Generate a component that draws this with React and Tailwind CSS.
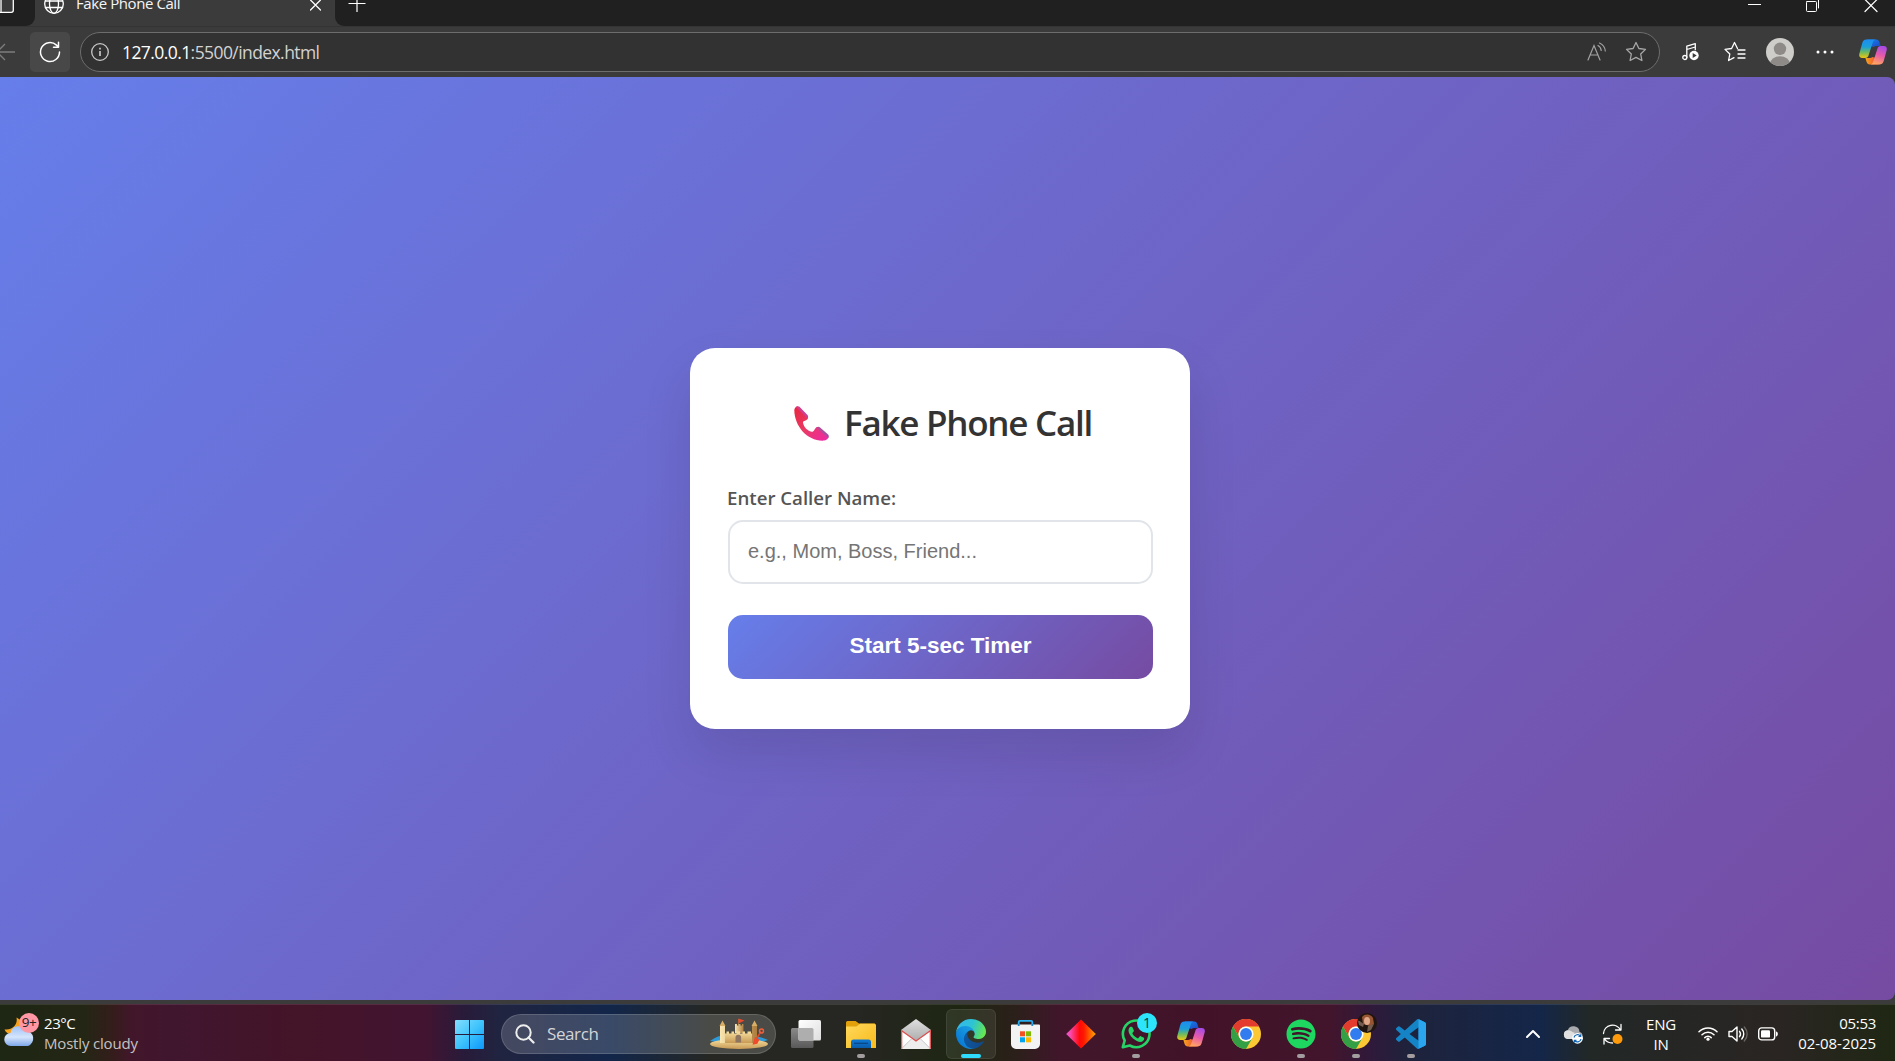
import React from "react";
import { FaSpotify } from "react-icons/fa";

const CopilotIcon = ({ id, className }) => (
  <svg viewBox="0 0 28 26" className={className}>
    <defs>
      <linearGradient id={id + "a"} x1="0" y1="0" x2="0" y2="1">
        <stop offset="0" stopColor="#1d8df2" />
        <stop offset=".4" stopColor="#1c9fd8" />
        <stop offset=".68" stopColor="#6dba62" />
        <stop offset="1" stopColor="#ecc80f" />
      </linearGradient>
      <linearGradient id={id + "b"} x1=".7" y1="0" x2=".4" y2="1">
        <stop offset="0" stopColor="#a64be8" />
        <stop offset=".5" stopColor="#e85ba8" />
        <stop offset="1" stopColor="#ffa463" />
      </linearGradient>
      <linearGradient id={id + "c"} x1="0" y1="0" x2="1" y2="1">
        <stop offset="0" stopColor="#1686ee" />
        <stop offset="1" stopColor="#1c45c4" />
      </linearGradient>
      <linearGradient id={id + "d"} x1="0" y1="0" x2="1" y2="0">
        <stop offset="0" stopColor="#f5a51c" />
        <stop offset="1" stopColor="#ee3d3c" />
      </linearGradient>
    </defs>
    <path d="M8 .6h9.200c1.700 0 2.700.9 3.200 2.500l1.200 4h-4.600c-1 0-1.700.3-2.300 1L11 7z" fill={`url(#${id}c)`} />
    <path d="M20 25.400h-9.200c-1.700 0-2.700-.9-3.200-2.500l-1.200-4H11c1 0 1.700-.3 2.300-1l3.700 1z" fill={`url(#${id}d)`} />
    <path d="M7.200.6h9.300c-1.800.3-2.300 1.600-2.900 3.400L9.600 16.300c-.6 1.800-1.500 2.700-3.300 2.700H3.200C.6 19-.3 17.100.4 14.500L3.200 4.200C3.900 1.900 5 .6 7.200.6z" fill={`url(#${id}a)`} />
    <path d="M20.800 25.400h-9.300c1.800-.3 2.300-1.600 2.900-3.400L18.400 9.700c.6-1.800 1.500-2.700 3.300-2.700h3.100c2.600 0 3.500 1.900 2.800 4.500l-2.800 10.300c-.7 2.300-1.800 3.600-4 3.600z" fill={`url(#${id}b)`} />
  </svg>
);

const ChromeIcon = () => (
  <svg viewBox="0 0 48 48" className="size-[30px]">
    <circle cx="24" cy="24" r="24" fill="#fcc934" />
    <path d="M3.200 12A24 24 0 0 1 44.800 12H24a12 12 0 0 0-10.400 18z" fill="#e33b2e" />
    <path d="M3.200 12 13.600 30A12 12 0 0 0 34.400 30L24 48A24 24 0 0 1 3.200 12z" fill="#34a046" />
    <circle cx="24" cy="24" r="12" fill="#fff" />
    <circle cx="24" cy="24" r="9.500" fill="#317df0" />
  </svg>
);

const EdgeIcon = () => (
  <svg viewBox="0 0 256 256" className="size-[30px]">
    <defs>
      <linearGradient id="e1" x1=".2" y1="0" x2="1" y2=".3">
        <stop offset="0" stopColor="#0c59a4" />
        <stop offset="1" stopColor="#114a8b" />
      </linearGradient>
      <linearGradient id="e2" x1=".9" y1=".2" x2=".2" y2=".9">
        <stop offset="0" stopColor="#1b9de2" />
        <stop offset=".3" stopColor="#1595df" />
        <stop offset="1" stopColor="#0878d4" />
      </linearGradient>
      <linearGradient id="e3" x1="0" y1=".3" x2="1" y2=".55">
        <stop offset="0" stopColor="#35b8ee" />
        <stop offset=".5" stopColor="#2dc3d4" />
        <stop offset=".8" stopColor="#4fd784" />
        <stop offset="1" stopColor="#69e84e" />
      </linearGradient>
    </defs>
    <g transform="translate(-4.630 -4.920)">
      <path fill="url(#e1)" d="M235.680 195.460a93.730 93.730 0 0 1-10.540 4.710 101.870 101.870 0 0 1-35.900 6.460c-47.320 0-88.540-32.550-88.540-74.320A31.480 31.480 0 0 1 117.130 105c-42.800 1.800-53.800 46.400-53.800 72.530 0 73.880 68.090 81.370 82.760 81.370 7.910 0 19.840-2.300 27-4.560l1.310-.44a128.340 128.340 0 0 0 66.600-52.800 4 4 0 0 0-5.320-5.640Z" />
      <path fill="url(#e2)" d="M110.340 246.340A79.200 79.200 0 0 1 87.600 225a80.720 80.720 0 0 1 29.530-120c3.120-1.470 8.450-4.130 15.540-4a32.350 32.350 0 0 1 25.690 13 31.880 31.880 0 0 1 6.360 18.660c0-.21 24.460-79.600-80-79.600-43.900 0-80 41.660-80 78.210a130.150 130.150 0 0 0 12.110 56 128 128 0 0 0 156.380 67.110 75.550 75.550 0 0 1-62.780-8Z" />
      <path fill="url(#e3)" d="M156.940 153.780c-.81 1.050-3.300 2.500-3.300 5.660 0 2.610 1.700 5.120 4.720 7.230 14.380 10 41.490 8.680 41.560 8.680a59.560 59.560 0 0 0 30.270-8.350 61.380 61.380 0 0 0 30.430-52.880c.26-22.410-8-37.310-11.340-43.910C228.090 28.760 182.350 4.920 132.610 4.920a128 128 0 0 0-128 126.200c.48-36.540 36.800-66.050 80-66.050 3.500 0 23.460.34 42 10.070 16.340 8.580 24.900 18.940 30.850 29.210 6.180 10.670 7.280 24.150 7.280 29.520s-2.740 13.330-7.800 19.910Z" />
    </g>
  </svg>
);

const WindowsIcon = () => (
  <svg viewBox="0 0 29 29" className="size-[29px]">
    <defs>
      <linearGradient id="win" gradientUnits="userSpaceOnUse" x1="0" y1="0" x2="29" y2="29">
        <stop offset="0" stopColor="#83deff" />
        <stop offset=".5" stopColor="#3fc4fb" />
        <stop offset="1" stopColor="#0d97fb" />
      </linearGradient>
    </defs>
    <path fill="url(#win)" d="M1 0h13v14H0V1a1 1 0 0 1 1-1zM15 0h13a1 1 0 0 1 1 1v13H15zM0 15h14v14H1a1 1 0 0 1-1-1zM15 15h14v13a1 1 0 0 1-1 1H15z" />
  </svg>
);

const CastleIcon = () => (
  <svg viewBox="0 0 60 32" className="h-8 w-[60px]">
    <defs>
      <linearGradient id="sand" x1="0" y1="0" x2="0" y2="1">
        <stop offset="0" stopColor="#f7dfa0" />
        <stop offset="1" stopColor="#c79a55" />
      </linearGradient>
      <linearGradient id="tower" x1="0" y1="0" x2="1" y2="0">
        <stop offset="0" stopColor="#fae6b0" />
        <stop offset="1" stopColor="#ad7d3d" />
      </linearGradient>
    </defs>
    <path d="M1 23c5-4 11-6 16-6l5 9zM42 18c8 0 12 2 17 4l-14 4z" fill="#2e9bd8" />
    <ellipse cx="30" cy="26" rx="29" ry="5" fill="url(#sand)" />
    <path d="M29.500 1v6" stroke="#a1783d" strokeWidth=".8" />
    <path d="M29.500.5l6 2-6 3z" fill="#f0482b" />
    <path d="M26 6h2v1.500h1.500V6h2v1.500H33V6h1.500v9H26z" fill="url(#tower)" />
    <path d="M12 13.500h3v2h2.500v-2H20v2h2.500v-2H25v2h2.500v-2H31v2h2.500v-2H36v2h2.500v-2H42v2h3V25H12z" fill="url(#sand)" />
    <path d="M11 8h5v17h-5zM43 8h5v17h-5z" fill="url(#tower)" />
    <path d="M10.500 8l3-5.500 3 5.500zM42.500 8l3-5.500 3 5.500z" fill="#d8ae66" />
    <path d="M26.500 24.500v-5a2.800 2.800 0 0 1 5.600 0v5z" fill="#8d7560" />
    <path d="M52 13.500l-5 8" stroke="#e8472b" strokeWidth="1.500" />
    <circle cx="52.500" cy="13" r="2" fill="none" stroke="#f0603a" strokeWidth="1.500" />
    <path d="M46 19l4.500 2.600-2.200 4.200-4.800.9z" fill="#ee4a2c" />
  </svg>
);

const TaskViewIcon = () => (
  <svg viewBox="0 0 30 28" className="h-7 w-[30px]">
    <defs>
      <linearGradient id="tv" x1="0" y1="0" x2="1" y2="1">
        <stop offset="0" stopColor="#fff" />
        <stop offset="1" stopColor="#dedede" />
      </linearGradient>
      <linearGradient id="tv2" x1="0" y1="0" x2="0" y2="1">
        <stop offset="0" stopColor="#8a8a8a" />
        <stop offset="1" stopColor="#595959" />
      </linearGradient>
    </defs>
    <rect x="0" y="8" width="22.500" height="20" rx="1.500" fill="url(#tv2)" />
    <rect x="7.500" y="0" width="22.500" height="20.500" rx="1.500" fill="url(#tv)" />
    <path d="M7.500 8h13.500a1.500 1.500 0 0 1 1.500 1.500v11H9a1.500 1.500 0 0 1-1.500-1.500z" fill="#aeaeae" />
  </svg>
);

const ExplorerIcon = () => (
  <svg viewBox="0 0 30 27" className="h-[27px] w-[30px]">
    <defs>
      <linearGradient id="fold" x1="0" y1="0" x2="1" y2="1">
        <stop offset="0" stopColor="#ffd95c" />
        <stop offset="1" stopColor="#f8b91b" />
      </linearGradient>
      <linearGradient id="fold2" x1="0" y1="0" x2="0" y2="1">
        <stop offset="0" stopColor="#0f7ad4" />
        <stop offset="1" stopColor="#0b5cab" />
      </linearGradient>
    </defs>
    <path d="M1.500 0h8l3.500 2.500h16L27 8H0V1.500A1.500 1.500 0 0 1 1.500 0z" fill="#e2a10a" />
    <path d="M0 5.500h10.500L14 2.800h14.500A1.500 1.500 0 0 1 30 4.300V27H0z" fill="url(#fold)" />
    <path d="M5 27v-6a2.500 2.500 0 0 1 2.500-2.500h15A2.500 2.500 0 0 1 25 21v6z" fill="url(#fold2)" />
    <path d="M8 22.300h14" stroke="#0a4483" strokeWidth="1.200" />
  </svg>
);

const MailIcon = () => (
  <svg viewBox="0 0 30 30" className="size-[30px]">
    <defs>
      <linearGradient id="mailg" x1="0" y1="0" x2="0" y2="1">
        <stop offset="0" stopColor="#e0e0e0" />
        <stop offset="1" stopColor="#999" />
      </linearGradient>
    </defs>
    <path d="M0 11 15 0l15 11v19H0z" fill="url(#mailg)" />
    <path d="M0 11l11 8L0 30zM30 11l-11 8 11 11z" fill="#fff" />
    <path d="M0 30l11-11 4 3 4-3 11 11z" fill="#eee" />
    <path d="M.7 30V11.700L15 22l14.300-10.300V30" fill="none" stroke="#dc4d4d" strokeWidth="1.200" />
    <path d="M.5 29.800 11 19.500M29.500 29.800 19 19.500" stroke="#ccc" strokeWidth=".8" />
  </svg>
);

const StoreIcon = () => (
  <svg viewBox="0 0 29 29" className="mr-px size-[29px]">
    <path d="M7.700 6V2.200c0-.8.500-1.300 1.300-1.300h11c.8 0 1.300.5 1.300 1.300V6" fill="none" stroke="#29aef0" strokeWidth="1.800" />
    <path d="M1 4.500h27a1 1 0 0 1 1 1V24a5 5 0 0 1-5 5H5a5 5 0 0 1-5-5V5.500a1 1 0 0 1 1-1z" fill="#f3f3f3" />
    <path d="M7.700 6V4M21.300 6V4" stroke="#1888c8" strokeWidth="1.800" />
    <path d="M9 11.300h5v5H9z" fill="#f25022" />
    <path d="M15 11.300h5v5h-5z" fill="#7fba00" />
    <path d="M9 17.300h5v5H9z" fill="#00a4ef" />
    <path d="M15 17.300h5v5h-5z" fill="#ffb900" />
  </svg>
);

const DiamondIcon = () => (
  <svg viewBox="0 0 30 30" className="size-[30px]">
    <defs>
      <linearGradient id="dia">
        <stop offset="0" stopColor="#ee58d8" />
        <stop offset=".15" stopColor="#fa48a8" />
        <stop offset=".45" stopColor="#ff0808" />
        <stop offset=".6" stopColor="#ff1a00" />
        <stop offset="1" stopColor="#ffa800" />
      </linearGradient>
    </defs>
    <path d="M15 .4 29.800 15 15 29.600.2 15z" fill="url(#dia)" />
  </svg>
);

const WhatsAppIcon = () => (
  <svg viewBox="0 0 30 30" className="size-[30px]">
    <path d="M1.800 28.200 3.700 21.500A13.300 13.300 0 1 1 8.800 26.500z" fill="none" stroke="#25d366" strokeWidth="2.600" strokeLinejoin="round" />
    <path d="M10.200 7.700c.7 0 1.100.1 1.500 1l1.100 2.600c.2.600 0 1-.3 1.400l-.9 1.100c-.3.300-.3.600-.1 1 1.200 2 2.700 3.400 4.900 4.400.4.200.8.200 1-.1l1.300-1.600c.3-.4.700-.5 1.100-.3l2.700 1.300c.4.200.7.400.7.700.1 2-1.600 3.700-3.800 3.700-2 0-5-1.200-7.600-3.600-2.800-2.600-4.300-5.300-4.300-7.700 0-1.700.9-3.200 1.900-3.800.2-.1.500-.1.800-.1z" fill="#25d366" />
  </svg>
);

const VSCodeIcon = () => (
  <svg viewBox="0 0 24 24" className="size-[30px]">
    <path fill="#1584c7" d="M23.150 2.587L18.210.21a1.494 1.494 0 0 0-1.705.29l-9.460 8.630-4.120-3.128a.999.999 0 0 0-1.276.057L.327 7.261A1 1 0 0 0 .326 8.740L3.899 12 .326 15.260a1 1 0 0 0 .001 1.479L1.650 17.940a.999.999 0 0 0 1.276.057l4.120-3.128 9.460 8.630a1.492 1.492 0 0 0 1.704.29l4.942-2.377A1.500 1.500 0 0 0 24 20.060V3.939a1.500 1.500 0 0 0-.85-1.352zm-5.146 14.861L10.826 12l7.178-5.448v10.896z" />
    <path fill="#2ba6ee" d="M18 .15v23.700l5.150-2.440A1.500 1.500 0 0 0 24 20.060V3.940a1.500 1.500 0 0 0-.85-1.350L18.210.21z" />
  </svg>
);

const WeatherIcon = () => (
  <svg viewBox="0 0 32 32" className="size-8">
    <defs>
      <linearGradient id="cld" x1="0" y1="0" x2="0" y2="1">
        <stop offset="0" stopColor="#9fc2f5" />
        <stop offset=".55" stopColor="#d5e5fc" />
        <stop offset="1" stopColor="#7da7ea" />
      </linearGradient>
    </defs>
    <path d="M12.500 2.500C14 9 9 15.500.5 14.500 2 19 8 21 13 18s7-9 5-12z" fill="#f7a21c" />
    <path d="M7 31a6.500 6.500 0 0 1-.5-13 8 8 0 0 1 15-2.500A8 8 0 0 1 24 31z" fill="url(#cld)" />
  </svg>
);

const stroke = { fill: "none", stroke: "#fff", strokeLinecap: "round", strokeLinejoin: "round" };
const starPath = "M11 1.500l2.900 6 6.600.9-4.800 4.600 1.200 6.500-5.900-3.100-5.900 3.100 1.200-6.500L1.500 8.400l6.600-.9z";

function TabStrip() {
  return (
    <header className="flex h-[26px] shrink-0 overflow-hidden bg-[#3b3b3b]">
      <div className="flex w-[35px] shrink-0 items-start rounded-br-[9px] bg-[#202020]">
        <svg viewBox="0 0 35 26" className="h-[26px] w-[35px]">
          <path d="M1 0h12v12H1z" fill="#3a3a3a" />
          <path d="M-2 12.300h13.300a2 2 0 0 0 2-2V-2M1 0v12" {...stroke} strokeWidth="1.300" />
        </svg>
      </div>
      <div className="flex w-[300px] shrink-0 items-start">
        <svg viewBox="0 0 20 14" className="ml-[9px] h-[14px] w-5">
          <g {...stroke} strokeWidth="1.300">
            <circle cx="10" cy="4" r="9.300" />
            <ellipse cx="10" cy="4" rx="4.500" ry="9.300" />
            <path d="M1.500 1h17M1.500 7.500h17" />
          </g>
        </svg>
        <span className="-mt-2 ml-[12px] h-[22px] flex-1 whitespace-nowrap font-['Open_Sans','Noto_Sans',sans-serif] text-[15px] leading-[22px] tracking-[-0.42px] text-[#f5f5f5]">
          Fake Phone Call
        </span>
        <svg viewBox="0 0 11 11" className="mr-[14px] h-[11px] w-[11px]">
          <path d="M.5 0l10 10M10.500 0l-10 10" {...stroke} strokeWidth="1.300" />
        </svg>
      </div>
      <div className="flex flex-1 items-start justify-between rounded-bl-[9px] bg-[#202020] pl-[13px] pr-[17px]">
        <svg viewBox="0 0 18 12" className="h-3 w-[18px]">
          <path d="M.5 3.500h17M9 0v12" stroke="#fff" strokeWidth="1.200" />
        </svg>
        <div className="flex items-start gap-[45px]">
          <svg viewBox="0 0 13 13" className="size-[13px]">
            <path d="M0 4.500h13" stroke="#fff" />
          </svg>
          <svg viewBox="0 0 13 13" className="size-[13px]">
            <path d="M1 1.500h8.500a1 1 0 0 1 1 1V10.500a1 1 0 0 1-1 1H1.500a1 1 0 0 1-1-1V2.500a1 1 0 0 1 1-1zM12.500 0v8" {...stroke} />
          </svg>
          <svg viewBox="0 0 14 13" className="h-[13px] w-[14px]">
            <path d="M1 -.5l12 12M13 -.5L1 11.500" {...stroke} strokeWidth="1.200" />
          </svg>
        </div>
      </div>
    </header>
  );
}

function Toolbar() {
  return (
    <nav className="flex h-[51px] shrink-0 items-center border-t border-[#343434] bg-[#3b3b3b]">
      <svg viewBox="0 0 15 18" className="mb-px h-[18px] w-[15px]">
        <path d="M-2 9h17M5 1l-8 8 8 8" fill="none" stroke="#7d7d7d" strokeWidth="1.300" />
      </svg>
      <button className="ml-[15px] flex size-10 items-center justify-center rounded-[5px] bg-[#484848]">
        <svg viewBox="0 0 22 22" className="size-[22px]">
          <path d="M20.500 11a9.500 9.500 0 1 1-3-6.900l1.700 1.700M19.500 1.200v5h-5" {...stroke} strokeWidth="1.500" />
        </svg>
      </button>
      <div className="ml-[10px] flex h-10 w-[1580px] items-center rounded-full border border-[#6d6d6d] bg-[#323232] pl-[10px] pr-[11px]">
        <svg viewBox="0 0 18 18" className="size-[18px]">
          <circle cx="9" cy="9" r="8.300" fill="none" stroke="#c8c8c8" strokeWidth="1.300" />
          <path d="M9 8v5M9 4.800v1.600" stroke="#d0d0d0" strokeWidth="1.600" />
        </svg>
        <span className="mb-px ml-[13px] flex-1 whitespace-nowrap font-['Open_Sans','Noto_Sans',sans-serif] text-[17.500px] leading-6 tracking-[-0.58px] text-[#d3d3d3]">
          <span className="text-white">127.0.0.1</span>:5500/index.html
        </span>
        <svg viewBox="0 0 20 20" className="mr-[18px] mb-px size-5">
          <g fill="none" stroke="#a3a3a3" strokeWidth="1.200" strokeLinecap="round">
            <path d="M1 18 7 3.500 13 18M3 13h8M11 3.500c2 1 3 2.800 3.200 5M12.500 1c3.300 1.500 5.500 4.500 5.800 8" />
          </g>
        </svg>
        <svg viewBox="0 0 22 22" className="mr-[1px] size-[22px]">
          <path d={starPath} fill="none" stroke="#a8a8a8" strokeWidth="1.300" strokeLinejoin="round" />
        </svg>
      </div>
      <div className="flex flex-1 items-center">
        <svg viewBox="0 0 17 18" className="ml-[22px] h-[18px] w-[17px]">
          <circle cx="2.800" cy="14.500" r="2" {...stroke} strokeWidth="1.300" />
          <path d="M4.800 14.500V3.200l8.500-2.500v6M4.800 6.500l8.500-2.500" {...stroke} strokeWidth="1.300" />
          <circle cx="12" cy="12.500" r="4.700" fill="#fff" />
          <path d="M10.700 10v5l4-2.500z" fill="#3b3b3b" />
        </svg>
        <svg viewBox="0 0 22 22" className="ml-[25px] size-[22px]">
          <path d="M13.500 7.500 10.500 1.500l-2.900 6-6.600.9 4.800 4.600-1.200 6.500 5.400-2.800M14 9h7M14 13h7M14 17h7" {...stroke} strokeWidth="1.300" />
        </svg>
        <svg viewBox="0 0 28 28" className="ml-[20px] size-7">
          <defs>
            <clipPath id="av"><circle cx="14" cy="14" r="14" /></clipPath>
          </defs>
          <circle cx="14" cy="14" r="14" fill="#cfcdca" />
          <g clipPath="url(#av)" fill="#8d8a87">
            <circle cx="14" cy="10.800" r="6.200" />
            <ellipse cx="14" cy="26" rx="10" ry="7.700" />
          </g>
        </svg>
        <svg viewBox="0 0 18 4" className="ml-[22px] h-1 w-[18px]">
          <g fill="#fff"><circle cx="2" cy="2" r="1.500" /><circle cx="9" cy="2" r="1.500" /><circle cx="16" cy="2" r="1.500" /></g>
        </svg>
        <CopilotIcon id="top" className="ml-[25px] h-[26px] w-7" />
      </div>
    </nav>
  );
}

function CallCard() {
  return (
    <section className="relative top-[-0.5px] left-[-7.5px] flex h-[381px] w-[500px] flex-col rounded-[25px] bg-white pr-[37px] pl-[38px] shadow-[0_25px_50px_rgba(0,0,0,0.1)]">
      <h1 className="mt-[49px] flex h-[52px] items-center pl-[66px] font-['Open_Sans','Noto_Sans',sans-serif] text-[35px] leading-[52px] font-semibold tracking-[-1.25px] text-[#333]">
        <svg viewBox="0 0 35 35" className="mt-px mr-[15px] size-[35px] shrink-0">
          <defs>
            <linearGradient id="ph" x1="0" y1="0" x2="1" y2="1">
              <stop offset="0" stopColor="#e8253f" />
              <stop offset=".5" stopColor="#ea3a66" />
              <stop offset="1" stopColor="#ee28a8" />
            </linearGradient>
            <linearGradient id="ph2" x1="0" y1="0" x2="1" y2="1">
              <stop offset="0" stopColor="#d83a8c" />
              <stop offset="1" stopColor="#a1509f" />
            </linearGradient>
          </defs>
          <path d="M.3 4.500C.2 2.500 1.500.8 3.500.3L14 11c.4 1.500-.8 2.900-2.500 3.600-1.600.6-2.700 1-2.500 2.200.8 4.200 4.200 8 8.600 9 2.600.3 3-3.800 5.300-4.900L34.500 31c-.5 2.300-2.500 3.500-4.500 3.600C13.500 35.500.7 20.500.3 4.500z" fill="url(#ph)" />
          <path d="M2 1C2.700.2 4.500-.3 5.500.8l7.700 7.900c1.300 1.400 1.200 2.800.4 3.800zM22.500 21.500c.7-1 2.400-1.200 3.600-.1l8 7c1 1 .9 2.600.1 3.600z" fill="url(#ph2)" />
        </svg>
        <span className="whitespace-nowrap">Fake Phone Call</span>
      </h1>
      <label className="-ml-px mt-[36px] h-[26px] whitespace-nowrap font-['Open_Sans','Noto_Sans',sans-serif] text-[18.700px] leading-[26px] font-semibold tracking-[-0.02px] text-[#555]">
        Enter Caller Name:
      </label>
      <input
        placeholder="e.g., Mom, Boss, Friend..."
        className="mt-[9px] h-16 w-full rounded-[15px] border-2 border-[#e1e5e9] bg-white px-[18px] font-['Liberation_Sans',Arial,sans-serif] text-[20px] text-[#333] outline-none placeholder:text-[#757575]"
      />
      <button className="mt-[31px] h-16 w-full rounded-[15px] bg-[linear-gradient(135deg,#667eea_0%,#764ba2_100%)] pb-px font-['Liberation_Sans',Arial,sans-serif] text-[22.500px] font-bold text-white">
        Start 5-sec Timer
      </button>
    </section>
  );
}

function TaskItem({ children, dot, active }) {
  return (
    <div className={active ? "relative flex size-[50px] shrink-0 items-center justify-center rounded-[6px] border border-white/8 bg-white/8" : "relative flex size-[50px] shrink-0 items-center justify-center"}>
      {children}
      {dot && <i className="absolute bottom-[1px] left-[21px] h-1 w-2 rounded-full bg-[#a39da0]" />}
      {active && <i className="absolute bottom-0 left-[14px] h-1 w-5 rounded-full bg-[#2fdcfb]" />}
    </div>
  );
}

function Taskbar() {
  return (
    <footer className="flex h-[57px] shrink-0 items-center overflow-hidden border-t border-white/10 bg-[linear-gradient(90deg,#1e2614_0px,#242615_85px,#341d1b_112px,#42162a_132px,#40162f_170px,#441428_300px,#421431_425px,#281b3a_465px,#202440_500px,#12264a_610px,#1f2730_680px,#262722_710px,#262622_860px,#1e2612_960px,#2b201a_1015px,#41162b_1060px,#421328_1200px,#42152c_1330px,#30193a_1370px,#1e233c_1410px,#142649_1540px,#222826_1590px,#2a2523_1780px,#1f2713_1895px)] font-['Open_Sans','Noto_Sans',sans-serif] text-white">
      <div className="flex w-[444px] shrink-0 items-center">
        <div className="relative ml-[4px] mr-[8px] mt-[-5px] size-8">
          <WeatherIcon />
          <span className="absolute left-[15px] top-[-2px] flex size-5 items-center justify-center rounded-full bg-[#ff98a4] text-[13.500px] leading-none tracking-[-0.5px] text-[#222]">9+</span>
        </div>
        <div className="text-[15px] leading-5 tracking-[-0.45px] whitespace-nowrap">
          <div>23°C</div>
          <div className="tracking-[-0.18px] text-[#c6c2c2]">Mostly cloudy</div>
        </div>
      </div>
      <div className="flex w-[1000px] shrink-0 items-center gap-[5px] pt-[2px]">
        <TaskItem><WindowsIcon /></TaskItem>
        <div className="ml-[2px] flex h-10 w-[275px] shrink-0 items-center rounded-full border border-white/15 bg-white/17 pl-[13px] pr-[6px]">
          <svg viewBox="0 0 20 20" className="size-5">
            <circle cx="8.500" cy="8.500" r="7.200" fill="none" stroke="#eee" strokeWidth="2" />
            <path d="M13.500 13.500l5 5" stroke="#eee" strokeWidth="2.300" strokeLinecap="round" />
          </svg>
          <span className="ml-[12px] flex-1 text-[17px] leading-6 tracking-[-0.4px] text-[#d4d5d8]">Search</span>
          <CastleIcon />
        </div>
        <TaskItem><TaskViewIcon /></TaskItem>
        <TaskItem dot><ExplorerIcon /></TaskItem>
        <TaskItem><MailIcon /></TaskItem>
        <TaskItem active><EdgeIcon /></TaskItem>
        <TaskItem><StoreIcon /></TaskItem>
        <TaskItem><DiamondIcon /></TaskItem>
        <TaskItem dot>
          <WhatsAppIcon />
          <span className="absolute left-[26px] top-[4px] flex size-5 items-center justify-center rounded-full bg-[#2ce5fb] text-[14px] leading-none text-[#16343a]">1</span>
        </TaskItem>
        <TaskItem><CopilotIcon id="tb" className="h-[26px] w-7" /></TaskItem>
        <TaskItem><ChromeIcon /></TaskItem>
        <TaskItem dot><FaSpotify className="size-[30px] text-[#1ed760]" /></TaskItem>
        <TaskItem dot>
          <ChromeIcon />
          <svg viewBox="0 0 20 20" className="absolute left-[26px] top-[4px] size-5">
            <circle cx="10" cy="10" r="10" fill="#21150f" />
            <path d="M5 4c3-4 9-3 11 1l1 6-4 2-7-2z" fill="#985533" />
            <ellipse cx="10" cy="8" rx="3" ry="4" fill="#e0a98a" />
            <path d="M1 8c2-1 3 2 6 3l-1 3-4-2zM11 13l6-2-3 6-4 2z" fill="#725c50" />
          </svg>
        </TaskItem>
        <TaskItem dot><VSCodeIcon /></TaskItem>
      </div>
      <div className="flex flex-1 items-center pl-[82px] pr-[19px]">
        <svg viewBox="0 0 14 9" className="h-[9px] w-[14px] shrink-0">
          <path d="M1 8l6-6 6 6" {...stroke} strokeWidth="2" />
        </svg>
        <svg viewBox="0 0 20 18" className="ml-[23px] mt-[3px] h-[18px] w-5 shrink-0">
          <path d="M4.500 13a4.400 4.400 0 0 1 .3-8.700A6 6 0 0 1 16.500 6c2 .3 3 2 3 4v3z" fill="#a8aaad" />
          <path d="M4.500 13a4.400 4.400 0 0 1 .3-8.700c3 0 4.200 2 7 2.500L9 13z" fill="#e0e0e0" />
          <circle cx="14.500" cy="12.300" r="5.400" fill="#fff" />
          <path d="M11 11.500a3.600 3.600 0 0 1 6.500-1.200M18 13a3.600 3.600 0 0 1-6.500 1.400M17.700 8.300v2.200h-2.200M11.300 16.500v-2.200h2.200" fill="none" stroke="#1267b8" strokeWidth="1.200" />
        </svg>
        <svg viewBox="0 0 22 22" className="ml-[19px] mt-[2px] size-[22px] shrink-0">
          <path d="M1.500 10.500a9 9 0 0 1 17-3.500M19 1.500V7h-5.500M2 21v-5.500h5.500M2.500 16c2 3 5 4 8 4" {...stroke} strokeWidth="1.300" />
          <circle cx="15.500" cy="16" r="5" fill="#ff9a0b" />
        </svg>
        <div className="ml-[21px] mt-px w-8 shrink-0 text-center text-[15px] leading-5 tracking-[-0.2px]">
          <div>ENG</div>
          <div>IN</div>
        </div>
        <svg viewBox="0 0 20 15" className="ml-[21px] h-[15px] w-5 shrink-0">
          <path d="M1 5.700a12.700 12.700 0 0 1 18 0M4 8.800a8.500 8.500 0 0 1 12 0M6.800 11.600a4.500 4.500 0 0 1 6.400 0" {...stroke} strokeWidth="1.500" />
          <circle cx="10" cy="13.200" r="1.600" fill="#fff" />
        </svg>
        <svg viewBox="0 0 20 18" className="ml-[10px] mt-px h-[18px] w-5 shrink-0">
          <path d="M1 6.500h3L9 2v14l-5-4.500H1zM11.500 6.300c1.200 1.600 1.200 3.800 0 5.400M13.800 4c2.600 2.800 2.600 7.200 0 10" {...stroke} strokeWidth="1.400" />
          <path d="M16.300 2c3.800 4 3.800 10 0 14" fill="none" stroke="#68645f" strokeWidth="1.400" strokeLinecap="round" />
        </svg>
        <svg viewBox="0 0 20 14" className="ml-[10px] mt-px h-[14px] w-5 shrink-0">
          <rect x=".7" y=".9" width="16" height="12" rx="3" {...stroke} strokeWidth="1.400" />
          <rect x="3" y="3.200" width="9" height="7.400" rx="1.200" fill="#fff" />
          <path d="M18 4.500c1.300.3 1.800 1.200 1.800 2.500S19.300 9.200 18 9.500z" fill="#fff" />
        </svg>
        <div className="flex-1 text-right text-[15px] leading-5 tracking-[-0.3px] whitespace-nowrap">
          <div>05:53</div>
          <div className="tracking-[-0.05px]">02-08-2025</div>
        </div>
      </div>
    </footer>
  );
}

export default function App() {
  return (
    <div className="flex h-[1061px] w-[1895px] flex-col overflow-hidden bg-[#3b3b3b]">
      <TabStrip />
      <Toolbar />
      <main className="flex h-[923px] shrink-0 items-center justify-center rounded-r-[8px] bg-[linear-gradient(135deg,#667eea_0%,#764ba2_100%)]">
        <CallCard />
      </main>
      <div className="h-1 shrink-0 bg-[#3b3b3b]" />
      <Taskbar />
    </div>
  );
}
